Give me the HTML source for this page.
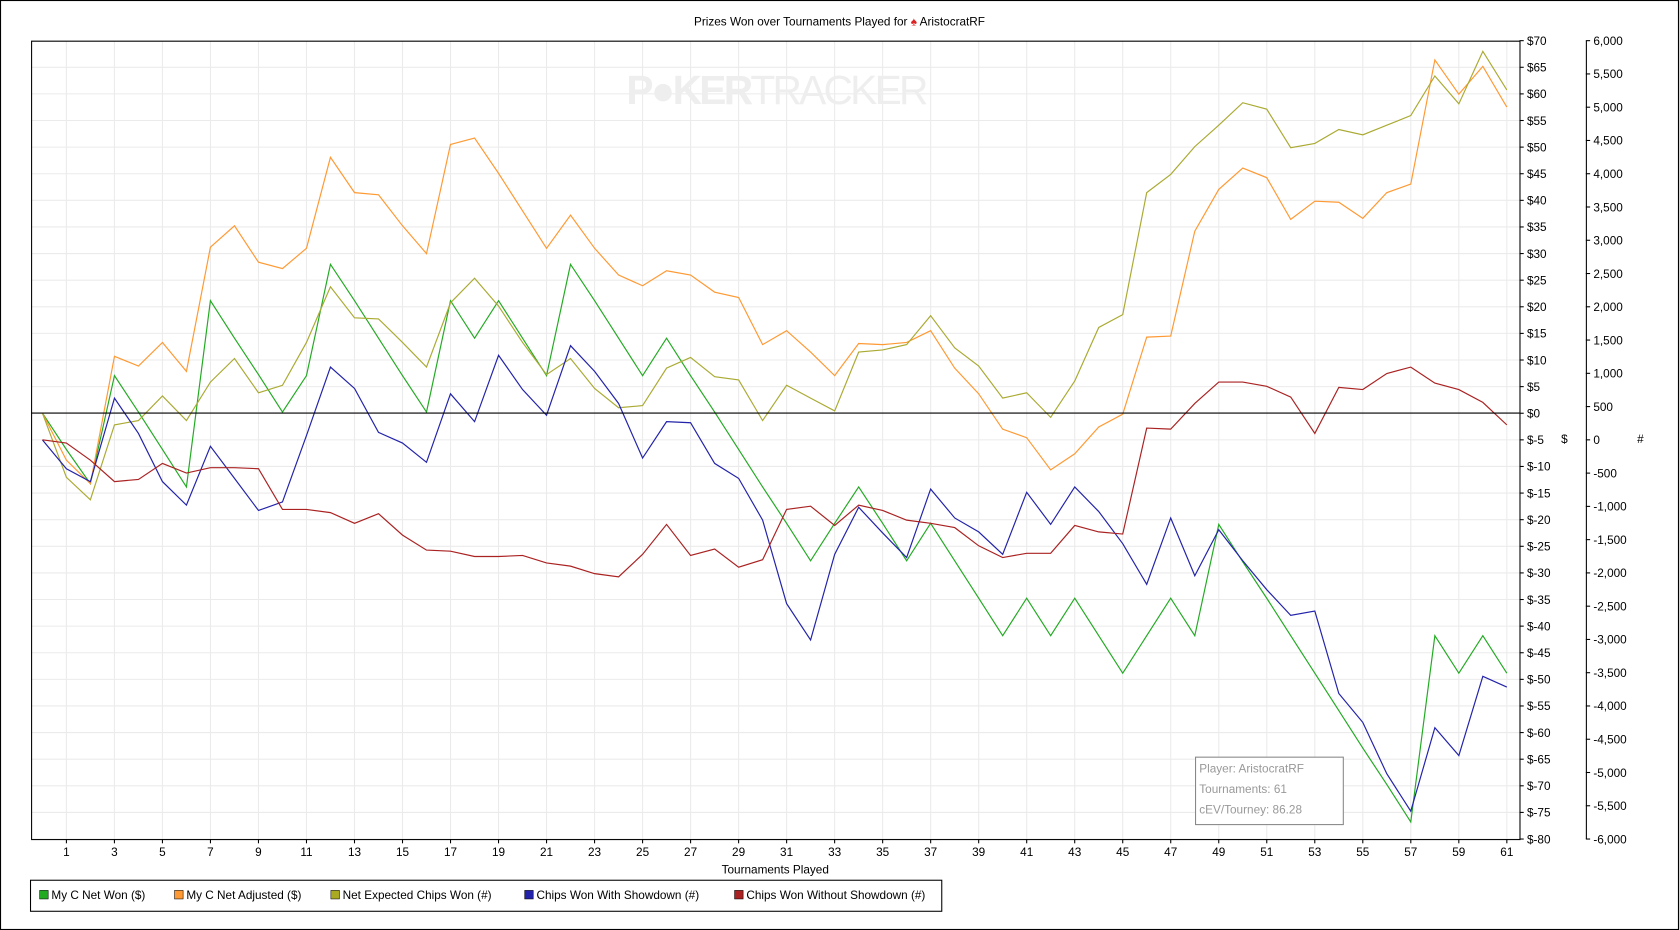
<!DOCTYPE html>
<html><head><meta charset="utf-8"><style>
html,body{margin:0;padding:0;background:#fff;}
svg{display:block;}
text{font-family:"Liberation Sans",sans-serif;font-size:11px;fill:#000;}
</style></head><body>
<svg id="c" width="1679" height="930" viewBox="0 0 1568 869" preserveAspectRatio="none" xmlns="http://www.w3.org/2000/svg">
<rect x="0" y="0" width="1568" height="869" fill="#fff"/>
<rect x="0.5" y="0.5" width="1567" height="868" fill="none" stroke="#000"/>
<text x="784" y="24" text-anchor="middle">Prizes Won over Tournaments Played for <tspan fill="#d22">♠</tspan> AristocratRF</text>
<g id="grid"></g>
<text x="726" y="97" text-anchor="middle" textLength="282" style="font-size:38px;font-weight:bold;fill:#eeeeee">P<tspan fill="#eeeeee">●</tspan>KER<tspan style="font-weight:normal">TRACKER</tspan></text>
<g id="lines"></g>
<line x1="29" y1="386" x2="1419" y2="386" stroke="#000"/>
<rect x="29.5" y="38.5" width="1390" height="746" fill="none" stroke="#000"/>
<line x1="1481.5" y1="38" x2="1481.5" y2="784" stroke="#000"/>
<g id="axes"></g>
<text x="1461" y="414" text-anchor="middle">$</text>
<text x="1532" y="414" text-anchor="middle">#</text>
<text x="724" y="816" text-anchor="middle">Tournaments Played</text>
<rect x="1116.5" y="707.5" width="138" height="63" fill="#fff" stroke="#888"/>
<text x="1120" y="722" style="fill:#999">Player: AristocratRF</text>
<text x="1120" y="741" style="fill:#999">Tournaments: 61</text>
<text x="1120" y="760" style="fill:#999">cEV/Tourney: 86.28</text>
<rect x="28.5" y="822.5" width="851" height="29" fill="#fff" stroke="#000"/>
<rect x="37" y="832" width="8" height="8" fill="#2a2" stroke="#000" stroke-width="0.5"/><text x="48" y="840">My C Net Won ($)</text>
<rect x="163" y="832" width="8" height="8" fill="#f93" stroke="#000" stroke-width="0.5"/><text x="174" y="840">My C Net Adjusted ($)</text>
<rect x="309" y="832" width="8" height="8" fill="#aa2" stroke="#000" stroke-width="0.5"/><text x="320" y="840">Net Expected Chips Won (#)</text>
<rect x="490" y="832" width="8" height="8" fill="#22a" stroke="#000" stroke-width="0.5"/><text x="501" y="840">Chips Won With Showdown (#)</text>
<rect x="686" y="832" width="8" height="8" fill="#a22" stroke="#000" stroke-width="0.5"/><text x="697" y="840">Chips Won Without Showdown (#)</text>
</svg>
<script>
var NS="http://www.w3.org/2000/svg";
function el(p,t,a,txt){var e=document.createElementNS(NS,t);for(var k in a)e.setAttribute(k,a[k]);if(txt!=null)e.textContent=txt;p.appendChild(e);return e;}
var g=document.getElementById('grid'),ax=document.getElementById('axes'),L=document.getElementById('lines');
function X(i){return 39.6+22.42*i;}
for(var v=70;v>=-80;v-=5){var y=38+(70-v)*4.9733;
 el(g,'line',{x1:29,x2:1419,y1:y,y2:y,stroke:'#ebebeb'});
 el(ax,'line',{x1:1419,x2:1423,y1:y,y2:y,stroke:'#000'});
 el(ax,'text',{x:1426,y:y+4},v<0?'$-'+(-v):'$'+v);}
for(var v=6000;v>=-6000;v-=500){var y=38+(6000-v)*746/12000;
 el(ax,'line',{x1:1481,x2:1485,y1:y,y2:y,stroke:'#000'});
 var s=Math.abs(v).toLocaleString('en-US');el(ax,'text',{x:1488,y:y+4},v<0?'-'+s:s);}
for(var i=1;i<=61;i+=2){var x=X(i);
 el(g,'line',{x1:x,x2:x,y1:38,y2:784,stroke:'#ebebeb'});
 el(ax,'line',{x1:x,x2:x,y1:784,y2:788,stroke:'#000'});
 el(ax,'text',{x:x,y:800,'text-anchor':'middle'},''+i);}
var S={
'#2a2':[386,420,452,351,385,420,455,281,316,350,385,351,247,281,316,351,385,281,316,281,316,351,247,281,316,351,316,351,385,420,455,489,524,489,455,489,524,489,524,559,594,559,594,559,594,629,594,559,594,490,525,559,594,629,664,699,733,768,594,629,594,629],
'#f93':[386,430,452,333,342,320,347,231,211,245,251,232,147,180,182,211,237,135,129,162,197,232,201,232,257,267,253,257,273,278,322,309,329,351,321,322,320,309,344,368,401,409,439,424,399,387,315,314,216,177,157,166,205,188,189,204,180,172,56,88,62,100],
'#aa3':[386,446,467,397,393,370,393,357,335,367,360,320,268,297,298,320,343,283,260,286,320,350,335,363,381,379,344,334,352,355,393,360,372,384,329,327,322,295,325,342,372,367,390,356,306,294,180,163,137,117,96,102,138,134,121,126,117,108,71,97,48,84],
'#22a':[411,438,450,372,405,450,472,417,447,477,469,407,343,363,404,414,432,368,394,332,364,388,323,347,377,428,394,395,433,447,486,564,598,518,474,498,521,457,484,497,518,460,490,455,478,508,546,484,538,495,524,551,575,571,648,675,723,758,680,706,632,642],
'#a22':[411,414,430,450,448,433,442,437,437,438,476,476,479,489,480,500,514,515,520,520,519,526,529,536,539,518,490,519,513,530,523,476,473,491,472,477,486,489,493,510,521,517,517,491,497,499,400,401,377,357,357,361,371,405,362,364,349,343,358,364,376,397]};
for(var c in S){var p=S[c].map(function(y,i){return X(i).toFixed(1)+','+y}).join(' ');
 el(L,'polyline',{points:p,fill:'none',stroke:c,'stroke-width':1.1});}
</script>
</body></html>
